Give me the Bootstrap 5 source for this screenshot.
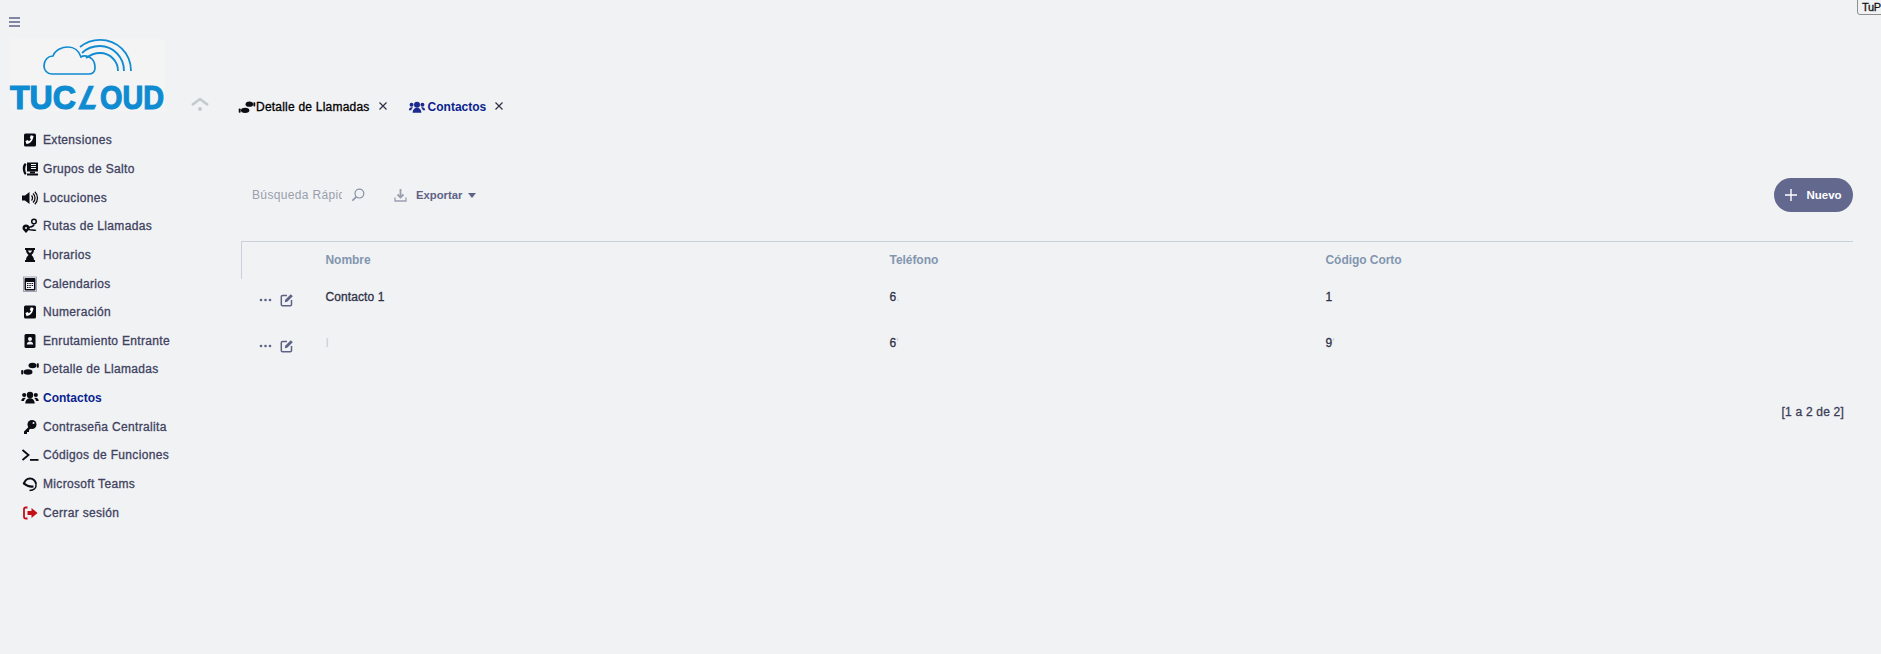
<!DOCTYPE html>
<html lang="es">
<head>
  <meta charset="UTF-8">
  <meta name="viewport" content="width=device-width, initial-scale=1.0">
  <title>TuCloud - Contactos</title>
  <link href="https://cdn.jsdelivr.net/npm/bootstrap@5.3.0/dist/css/bootstrap.min.css" rel="stylesheet">
  <style>
    body {
      background: #f1f2f4;
      font-family: "Liberation Sans", Arial, sans-serif;
      font-size: 12px;
      color: #3f4260;
      overflow: hidden;
      height: 654px;
      -webkit-text-stroke: .3px;
    }
    .page-wrap { height: 654px; }
    .side-col { width: 241px; flex: none; }
    .menu-btn { margin: 16px 0 0 9px; height: 12px; width: 11px; display: block; }
    .logo-row { margin: 11px 0 0 10px; height: 72px; }
    .logo-box { width: 155px; height: 72px; background: #f4f4f4; }
    .logo-box svg { overflow: visible; display: block; }
    .logo-txt { font-family: "Liberation Sans", Arial, sans-serif; font-weight: 700; font-size: 33px; fill: #0f8bd2; stroke: #0f8bd2; stroke-width: 1.2px; }
    .up-arrow { margin: 57px 0 0 25px; width: 20px; height: 16px; }
    .side-menu { margin-top: 15px; padding-left: 21px; list-style: none; }
    .side-menu li { height: 28.65px; display: flex; align-items: center; font-size: 12px; letter-spacing: .33px; white-space: nowrap; }
    .side-menu svg { width: 18px; height: 16px; margin-right: 4px; flex: none; }
    .side-menu .is-on { color: #0a1f8f; font-weight: 700; letter-spacing: 0; -webkit-text-stroke: 0; }
    .main-col { padding-right: 28px; min-width: 0; }
    .tab-row { margin-top: 98px; margin-left: -3px; height: 18px; font-size: 12px; letter-spacing: .22px; }
    .tab-item .tab-ic { width: 18px; height: 15px; margin-right: 0; }
    .tab-item { margin-right: 20px; }
    .tab-close { width: 10px; height: 10px; margin: -2px 0 0 8px; }
    .tab-one { color: #000; }
    .tab-two { color: #0a1f8f; font-weight: 700; letter-spacing: 0; -webkit-text-stroke: 0; }
    .tab-two .tab-ic { margin-right: 2px; }
    .tool-row { margin-top: 62px; height: 34px; padding-left: 11px; }
    .quick-search { width: 90px; overflow: hidden; white-space: nowrap; color: #9a9fae; font-size: 12px; letter-spacing: .35px; -webkit-text-stroke: 0; }
    .lens { width: 14px; height: 14px; margin: 0 0 0 9px; }
    .dl-icon { width: 13px; height: 14px; margin-left: 29px; }
    .export-txt { font-weight: 700; font-size: 11.3px; color: #5e6385; margin-left: 9px; -webkit-text-stroke: 0; }
    .caret-d { width: 0; height: 0; border-left: 4.5px solid transparent; border-right: 4.5px solid transparent; border-top: 5px solid #5e6385; margin-left: 6px; }
    .new-btn { width: 79px; height: 34px; padding: 2px 0 0; border: 0; border-radius: 17px; background: #63688f; color: #fff; font-size: 11.5px; font-weight: 700; -webkit-text-stroke: 0; }
    .new-btn svg { width: 12px; height: 12px; margin: -2px 9px 0 0; }
    .data-wrap { margin-top: 29px; }
    .data-tbl { width: 100%; table-layout: fixed; --bs-table-bg: transparent; margin: 0; }
    .data-tbl > thead > tr > th { height: 37px; padding: 0; vertical-align: middle; border: 0; border-top: 1px solid #c9cfdb; color: #8296b0; font-size: 12px; font-weight: 700; letter-spacing: -.05px; -webkit-text-stroke: 0; }
    .data-tbl > thead > tr > th:first-child { border-left: 1px solid #c9cfdb; }
    .data-tbl > tbody > tr > td { height: 46px; padding: 0 0 10px 0; vertical-align: middle; border: 0; color: #2f3145; font-size: 12px; letter-spacing: .1px; }
    .data-tbl > tbody > tr > td:first-child { padding: 0 0 5px 17px; }
    .dots-ic { width: 13px; height: 4px; margin-right: 8px; }
    .edit-ic { width: 14px; height: 14px; }
    .dim-mark { color: #c9ccd6; -webkit-text-stroke: 0; }
    .page-count { margin-top: 32px; padding-right: 9px; font-size: 12px; letter-spacing: .2px; color: #3a3d55; }
    .tup-btn { position: absolute; top: -5px; right: -6px; height: 20px; width: 30px; padding: 3px 0 0 4px; border: 1px solid #8e8e8e; border-radius: 3px; background: #f1f2f4; color: #111; font-size: 11px; letter-spacing: -.3px; text-align: left; line-height: 16px; overflow: hidden; }
  </style>
</head>
<body>

<svg width="0" height="0" class="d-none">
  <defs>
    <symbol id="ic-phone" viewBox="0 0 18 16"><rect x="3" y="1.500" width="12" height="13" rx="1.500" fill="#0c0c14"/><path d="M5.500 12c4-.5 6.500-3.500 7-8l-2.700-.7-1 2.700 1.200 1c-.4 1-1.200 1.800-2.200 2.200l-1-1.200-2.400 1z" fill="#fff"/></symbol>
    <symbol id="ic-group" viewBox="0 0 18 16"><path d="M4 2C1 4 1 10 4 14l1.500-1.500C3.800 10 3.800 6 5.500 3.500z" fill="#0c0c14"/><rect x="6" y="1.500" width="11" height="9" fill="#0c0c14"/><path d="M10 3.500h5M10 5.500h5M10 7.500h5" stroke="#f1f2f4"/><rect x="9" y="10.500" width="5" height="2" fill="#0c0c14"/><rect x="6" y="12.500" width="11" height="2" fill="#0c0c14"/></symbol>
    <symbol id="ic-sound" viewBox="0 0 18 16"><path d="M1 5.500h3L8.500 2v12L4 10.500H1z" fill="#0c0c14"/><path d="M10.500 5.500a3.500 3.500 0 0 1 0 5M12 3.500a6 6 0 0 1 0 9M13.800 1.800a8.500 8.500 0 0 1 0 12.400" fill="none" stroke="#0c0c14" stroke-width="1.300"/></symbol>
    <symbol id="ic-route" viewBox="0 0 18 16"><circle cx="13" cy="3.500" r="2.300" fill="none" stroke="#0c0c14" stroke-width="1.500"/><path d="M13 6.500c-.5 2-1.500 2.200-4 2.500-2 .3-2 2.500 0 2.800 2 .2 5 0 6 .7" fill="none" stroke="#0c0c14" stroke-width="1.500"/><path d="M5 15C3 13 1.500 11.500 1.500 10a3.500 3.500 0 0 1 7 0c0 1.500-1.500 3-3.500 5z" fill="#0c0c14"/><circle cx="5" cy="10" r="1" fill="#f1f2f4"/></symbol>
    <symbol id="ic-glass" viewBox="0 0 18 16"><path d="M4 1h10v2h-1c0 3-1.800 4-2.500 5 .7 1 2.500 2 2.500 5h1v2H4v-2h1c0-3 1.800-4 2.500-5C6.800 7 5 6 5 3H4z" fill="#0c0c14"/><path d="M7 3.500h4c-.3 1-1.200 2-2 2.500C8.200 5.500 7.300 4.500 7 3.500z" fill="#f1f2f4"/></symbol>
    <symbol id="ic-cal" viewBox="0 0 18 16"><rect x="3.500" y="2" width="11" height="12.500" rx="1" fill="#0c0c14"/><rect x="2.500" y="1" width="13" height="14.500" fill="none" stroke="#8a8da8" stroke-width=".8"/><rect x="5" y="6" width="8" height="7" fill="#f1f2f4"/><path d="M6 7.500h1.500M8.300 7.500h1.500M10.600 7.500h1.500M6 9.500h1.500M8.300 9.500h1.500M10.600 9.500h1.500M6 11.500h1.500M8.300 11.500h1.500" stroke="#0c0c14" stroke-width="1.100"/></symbol>
    <symbol id="ic-book" viewBox="0 0 18 16"><rect x="3.500" y="1" width="11" height="14" rx="1.500" fill="#0c0c14"/><circle cx="9" cy="6" r="2" fill="#f1f2f4"/><path d="M5.800 11.500c0-4 6.400-4 6.400 0z" fill="#f1f2f4"/></symbol>
    <symbol id="ic-prints" viewBox="0 0 18 16"><ellipse cx="11.500" cy="4.500" rx="4" ry="2.800" fill="#0c0c14"/><rect x="15.800" y="2.300" width="2" height="4.500" rx=".8" fill="#0c0c14"/><ellipse cx="7" cy="11" rx="4.500" ry="2.800" fill="#0c0c14"/><rect x=".2" y="9" width="2" height="4.500" rx=".8" fill="#0c0c14"/></symbol>
    <symbol id="ic-users" viewBox="0 0 18 16"><circle cx="9" cy="5" r="3.200"/><circle cx="3.200" cy="5" r="2.100"/><circle cx="14.800" cy="5" r="2.100"/><path d="M4.300 13.500c0-7 9.400-7 9.400 0zM.3 11c0-3 2.900-3.700 4.400-2.800-1 .7-1.700 1.500-1.700 2.800zM17.700 11c0-3-2.900-3.700-4.400-2.800 1 .7 1.700 1.500 1.700 2.800z"/></symbol>
    <symbol id="ic-key" viewBox="0 0 18 16"><circle cx="11" cy="5.500" r="4.500" fill="#0c0c14"/><path d="M8.500 7L3 12.500V15h3v-2h2v-2l2-2z" fill="#0c0c14"/><circle cx="12.500" cy="4" r="1" fill="#f1f2f4"/></symbol>
    <symbol id="ic-term" viewBox="0 0 18 16"><path d="M1.500 3l6 5-6 5" fill="none" stroke="#0c0c14" stroke-width="1.800"/><rect x="9" y="12" width="8.500" height="1.800" fill="#0c0c14"/></symbol>
    <symbol id="ic-head" viewBox="0 0 18 16"><path d="M3 8.500a6 6 0 0 1 12 0" fill="none" stroke="#0c0c14" stroke-width="1.800"/><path d="M2.500 6.500c1.500 3 6 4.500 10 4" fill="none" stroke="#0c0c14" stroke-width="2.200"/><path d="M15 8.500c.5 3.500-2 6-6.500 6" fill="none" stroke="#0c0c14" stroke-width="1.500"/></symbol>
    <symbol id="ic-exit" viewBox="0 0 18 16"><path d="M6.500 2.500h-2A1.500 1.500 0 0 0 3 4v8a1.500 1.500 0 0 0 1.500 1.500h2" fill="none" stroke="#c40f17" stroke-width="1.800"/><path d="M6.500 6h4V3l6 5-6 5v-3h-4z" fill="#c40f17"/></symbol>
    <symbol id="ic-x" viewBox="0 0 10 10"><path d="M1.500 1.500l7 7M8.500 1.500l-7 7" stroke="#2f3145" stroke-width="1.200"/></symbol>
    <symbol id="ic-edit" viewBox="0 0 14 14"><path d="M7 2.500H2.500A1.200 1.200 0 0 0 1.300 3.700v7.800a1.200 1.200 0 0 0 1.200 1.200h7.800a1.200 1.200 0 0 0 1.200-1.200V7" fill="none" stroke="#5e6385" stroke-width="1.500"/><path d="M4.800 9.300l.4-2.500L10.800 1.200l2 2-5.600 5.600z" fill="#5e6385"/></symbol>
    <symbol id="ic-dots" viewBox="0 0 13 4"><circle cx="2" cy="2" r="1.300" fill="#5e6385"/><circle cx="6.500" cy="2" r="1.300" fill="#5e6385"/><circle cx="11" cy="2" r="1.300" fill="#5e6385"/></symbol>
  </defs>
</svg>

<button type="button" class="tup-btn">TuP</button>

<div class="page-wrap d-flex">
  <aside class="side-col">
    <svg class="menu-btn" viewBox="0 0 11 12"><path d="M0 2h11M0 6h11M0 10h11" stroke="#5e6385" stroke-width="1.300"/></svg>
    <div class="logo-row d-flex">
      <div class="logo-box">
        <svg width="155" height="72" viewBox="0 0 155 72">
          <path d="M42 35C37 35 34 31 34 27C34 21 38 17 43 17C45 11 52 8 58 8C64 8 69 12 71 18C74 16 79 17 82 20C84 22 85 25 85 29C85 33 82 35 79 35Z" fill="#f4f4f4" stroke="#0f8bd2" stroke-width="1.700"/>
          <path d="M70 8C76 3 83 .8 90 .8C107 .8 121 14 121 32M72 14C76 10 83 7 90 7C103 7 114 18 114 32M76 19C80 16 85 14 90 14C100 14 108 22 108 32" fill="none" stroke="#0f8bd2" stroke-width="1.800"/>
          <text class="logo-txt" x="0" y="70" textLength="66" lengthAdjust="spacingAndGlyphs">TUC</text>
          <text class="logo-txt" x="67" y="70" transform="skewX(-24) translate(31 0)" textLength="18" lengthAdjust="spacingAndGlyphs">L</text>
          <text class="logo-txt" x="90" y="70" textLength="64" lengthAdjust="spacingAndGlyphs">OUD</text>
        </svg>
      </div>
      <svg class="up-arrow" viewBox="0 0 20 16"><path d="M2 9l8-6 8 6" fill="none" stroke="#c3cacb" stroke-width="2.600"/><circle cx="10" cy="13" r="2" fill="#c3cacb"/></svg>
    </div>
    <ul class="side-menu mb-0">
      <li><svg><use href="#ic-phone"/></svg>Extensiones</li>
      <li><svg><use href="#ic-group"/></svg>Grupos de Salto</li>
      <li><svg><use href="#ic-sound"/></svg>Locuciones</li>
      <li><svg><use href="#ic-route"/></svg>Rutas de Llamadas</li>
      <li><svg><use href="#ic-glass"/></svg>Horarios</li>
      <li><svg><use href="#ic-cal"/></svg>Calendarios</li>
      <li><svg><use href="#ic-phone"/></svg>Numeración</li>
      <li><svg><use href="#ic-book"/></svg>Enrutamiento Entrante</li>
      <li><svg><use href="#ic-prints"/></svg>Detalle de Llamadas</li>
      <li class="is-on"><svg fill="#0c0c14"><use href="#ic-users"/></svg>Contactos</li>
      <li><svg><use href="#ic-key"/></svg>Contraseña Centralita</li>
      <li><svg><use href="#ic-term"/></svg>Códigos de Funciones</li>
      <li><svg><use href="#ic-head"/></svg>Microsoft Teams</li>
      <li><svg><use href="#ic-exit"/></svg>Cerrar sesión</li>
    </ul>
  </aside>

  <main class="main-col flex-grow-1">
    <div class="tab-row d-flex align-items-center">
      <div class="tab-item tab-one d-flex align-items-center"><svg class="tab-ic"><use href="#ic-prints"/></svg>Detalle de Llamadas<svg class="tab-close"><use href="#ic-x"/></svg></div>
      <div class="tab-item tab-two d-flex align-items-center"><svg class="tab-ic" fill="#1b2a8f"><use href="#ic-users"/></svg>Contactos<svg class="tab-close"><use href="#ic-x"/></svg></div>
    </div>

    <div class="tool-row d-flex align-items-center">
      <div class="quick-search">Búsqueda Rápida</div>
      <svg class="lens" viewBox="0 0 15 15"><circle cx="9" cy="6" r="4.700" fill="none" stroke="#8a93a8" stroke-width="1.300"/><path d="M5.500 9.500L1.500 13.500" stroke="#8a93a8" stroke-width="1.600"/></svg>
      <svg class="dl-icon" viewBox="0 0 13 14"><path d="M6.500 1v8M3.500 6.500l3 3 3-3" fill="none" stroke="#9a9fae" stroke-width="1.800"/><path d="M1 9.500v3.500h11V9.500" fill="none" stroke="#9a9fae" stroke-width="1.300"/></svg>
      <span class="export-txt">Exportar</span>
      <span class="caret-d"></span>
      <button type="button" class="new-btn btn ms-auto d-flex align-items-center justify-content-center"><svg viewBox="0 0 12 12"><path d="M6 0v12M0 6h12" stroke="#fff" stroke-width="1.400"/></svg>Nuevo</button>
    </div>

    <div class="data-wrap">
      <table class="table data-tbl">
        <colgroup><col style="width:84px"><col style="width:564px"><col style="width:436px"><col></colgroup>
        <thead>
          <tr><th></th><th>Nombre</th><th>Teléfono</th><th>Código Corto</th></tr>
        </thead>
        <tbody>
          <tr>
            <td><svg class="dots-ic"><use href="#ic-dots"/></svg><svg class="edit-ic"><use href="#ic-edit"/></svg></td>
            <td>Contacto 1</td><td>6<span class="dim-mark">.</span></td><td>1</td>
          </tr>
          <tr>
            <td><svg class="dots-ic"><use href="#ic-dots"/></svg><svg class="edit-ic"><use href="#ic-edit"/></svg></td>
            <td><span class="dim-mark">I</span></td><td>6<span class="dim-mark">'</span></td><td>9<span class="dim-mark">'</span></td>
          </tr>
        </tbody>
      </table>
    </div>
    <div class="page-count text-end">[1 a 2 de 2]</div>
  </main>
</div>

<script src="https://cdn.jsdelivr.net/npm/bootstrap@5.3.0/dist/js/bootstrap.bundle.min.js"></script>
</body>
</html>
